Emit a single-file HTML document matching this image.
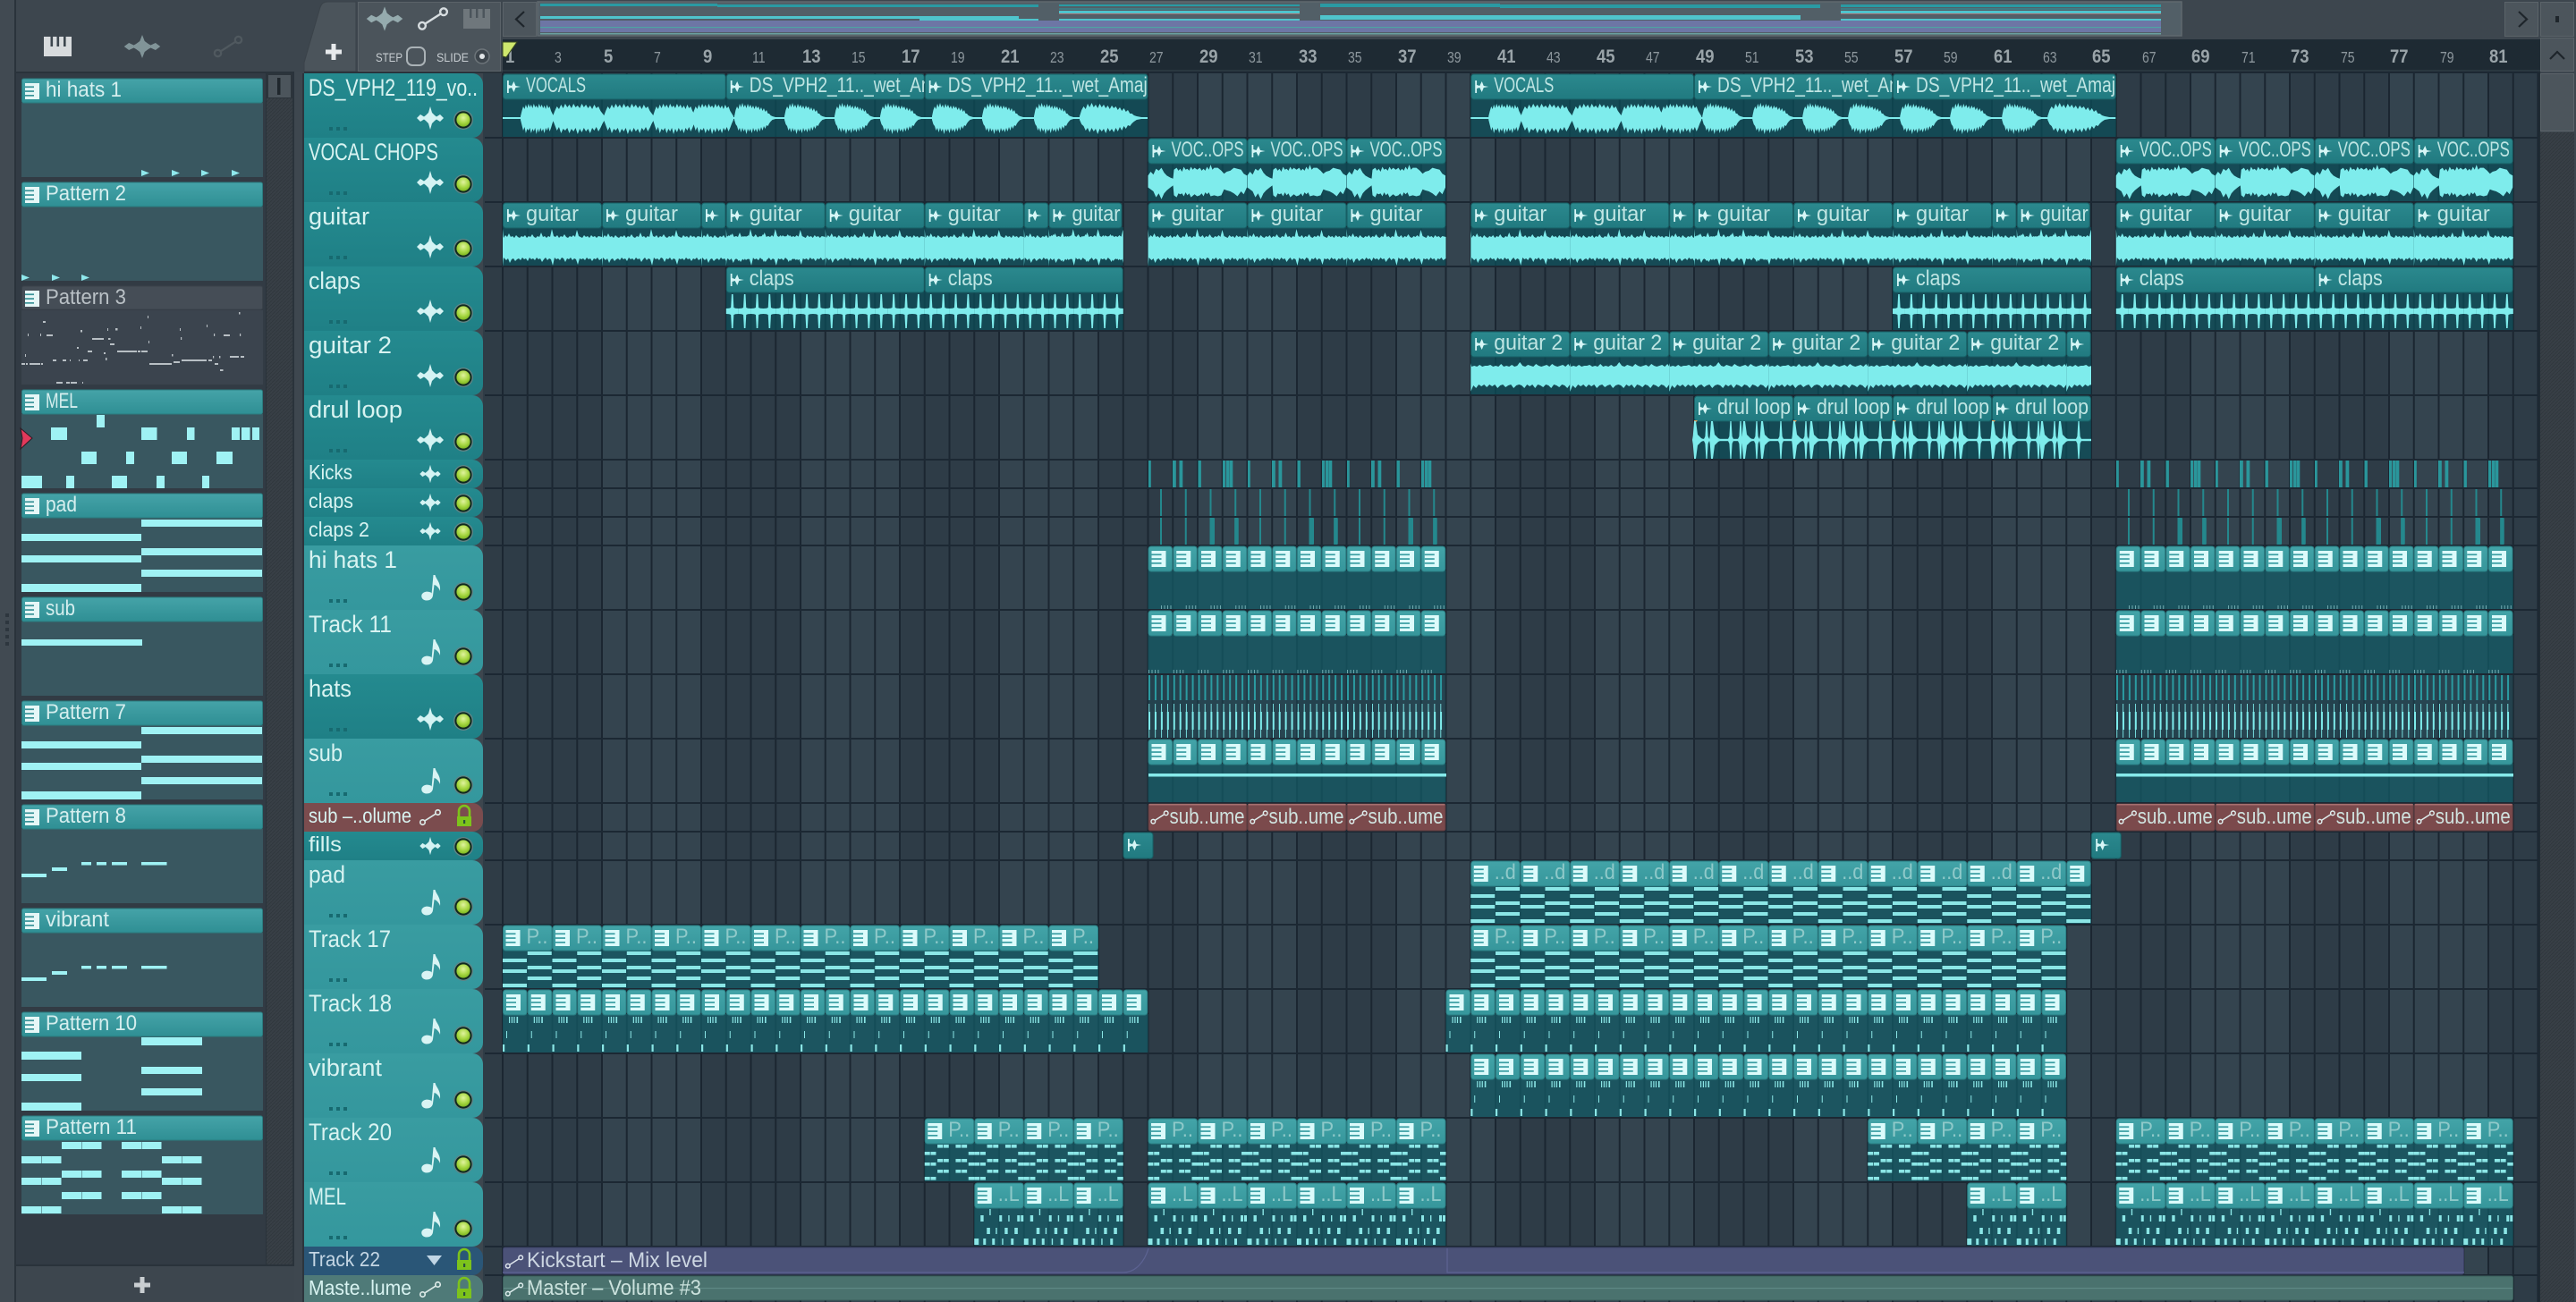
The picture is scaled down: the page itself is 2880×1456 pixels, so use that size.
<!DOCTYPE html>
<html><head><meta charset="utf-8"><title>Playlist</title>
<style>
html,body{margin:0;padding:0;background:#3b444c;overflow:hidden}
svg{display:block}
text{font-family:"Liberation Sans Narrow","Liberation Sans",sans-serif}
.ta{fill:url(#ga);stroke:#175f65;stroke-width:1}
.tp{fill:url(#gp);stroke:#2a7f84;stroke-width:1}
.c{font-size:24px;fill:#bfe5e3}
.d{font-size:24px;fill:#8fc9c9}
.h{font-size:27px;fill:#d8f3f1}
.s{font-size:23.5px;fill:#d8f3f1}
.l{font-size:24.5px;fill:#d5eeee}
.b{font-size:21px;font-weight:bold;fill:#9aa4a9;transform-box:fill-box;transform-origin:0 0;transform:scaleX(.88)}
.m{font-size:18px;fill:#8d979d;transform-box:fill-box;transform-origin:0 0;transform:scaleX(.78)}
</style></head><body>
<svg xmlns="http://www.w3.org/2000/svg" width="2880" height="1456" viewBox="0 0 2880 1456">
<defs>
<linearGradient id="ga" x1="0" y1="0" x2="0" y2="1"><stop offset="0" stop-color="#2b898e"/><stop offset="1" stop-color="#217a80"/></linearGradient>
<linearGradient id="gp" x1="0" y1="0" x2="0" y2="1"><stop offset="0" stop-color="#43a4a8"/><stop offset="1" stop-color="#36969b"/></linearGradient>
<linearGradient id="pk" x1="0" y1="0" x2="0" y2="1"><stop offset="0" stop-color="#45a3a8"/><stop offset="1" stop-color="#2f8f94"/></linearGradient>
<linearGradient id="ha" x1="0" y1="0" x2="0" y2="1"><stop offset="0" stop-color="#248a8f"/><stop offset="1" stop-color="#1f8086"/></linearGradient>
<linearGradient id="hp" x1="0" y1="0" x2="0" y2="1"><stop offset="0" stop-color="#399ca1"/><stop offset="1" stop-color="#34979d"/></linearGradient>
<radialGradient id="lg" cx=".5" cy=".35" r=".7"><stop offset="0" stop-color="#e0f39e"/><stop offset=".55" stop-color="#a8d844"/><stop offset="1" stop-color="#76b01a"/></radialGradient>
<pattern id="hatch" width="4" height="4" patternUnits="userSpaceOnUse"><rect width="4" height="4" fill="#383f46"/><path d="M0 4L4 0" stroke="#30373d" stroke-width="1"/></pattern>

<path id="wi" d="M-15 0L-11 -4L-7 -1.5L-5 -3L-2 -6L0 -13L2 -6L5 -3L7 -1.5L11 -4L15 0L11 4L7 1.5L5 3L2 6L0 13L-2 6L-5 3L-7 1.5L-11 4Z" fill="#d4f3f3"/>
<g id="led"><circle r="11" fill="#5f8486"/><circle r="9.6" fill="#10291f"/><circle r="7.6" fill="url(#lg)"/></g>
<g id="dots" fill="#176a70"><rect x="368" y="0" width="4" height="4"/><rect x="376" y="0" width="4" height="4"/><rect x="384" y="0" width="4" height="4"/></g>
<path id="hb" d="M340 0H528a12 12 0 0 1 12 12V60a12 12 0 0 1-12 12H340z"/>
<path id="hs" d="M340 0H528a12 12 0 0 1 12 12V20a12 12 0 0 1-12 12H340z"/>
<path id="note" fill="#d9f4f4" d="M482.5 55L484.5 33L486.5 33C487.5 38 493 41 492 51C490.5 46.5 487.5 44.5 485.5 44L484 56C483.5 60 480 61.5 477 61.5C472.5 61.5 470.5 58 471.5 55C473 51.5 478.5 50.5 482.5 53Z"/>
<g id="ha72"><use href="#hb" fill="url(#ha)"/><use href="#wi" x="481" y="50"/><use href="#led" x="518" y="52"/><use href="#dots" y="60"/></g>
<g id="hp72"><use href="#hb" fill="url(#hp)"/><use href="#note"/><use href="#led" x="518" y="52"/><use href="#dots" y="60"/></g>
<g id="ha32"><use href="#hs" fill="url(#ha)"/><use href="#wi" transform="translate(481 16) scale(.78)"/><use href="#led" x="518" y="17"/></g>
<g id="lock"><path d="M513 15V9a6 6 0 0 1 12 0V15" fill="none" stroke="#7dc31b" stroke-width="2.6"/><rect x="511" y="15" width="16" height="11" fill="#7dc31b"/><rect x="518" y="19" width="2.2" height="4" fill="#28503c"/></g>
<g id="au" fill="none" stroke-width="2"><path d="M-7 4.5L7 -4.5"/><circle cx="-10" cy="6.5" r="3.2"/><circle cx="10" cy="-6.5" r="3.2"/></g>

<path id="ai" fill="#d6f6f6" d="M0 -7L1.8 -7L1.8 -2L5 -1L7.5 -6L9.5 -1L15 0L9.5 1L7.5 6L5 1L1.8 2L1.8 7L0 7Z"/>
<g id="pi"><rect width="16" height="18" fill="#dcfbfb"/><rect y="3.4" width="11" height="1.7" fill="#3a9ea3"/><rect y="8.2" width="11" height="1.7" fill="#3a9ea3"/><rect y="13" width="11" height="1.7" fill="#3a9ea3"/></g>
<g id="pw"><rect width="16" height="18" fill="#e6f7f7"/><rect y="3.4" width="10" height="1.7" fill="#3a9398"/><rect y="8.2" width="10" height="1.7" fill="#3a9398"/><rect y="13" width="10" height="1.7" fill="#3a9398"/></g>

<g id="a1"><rect class="ta" x=".5" y="1" width="26.5" height="28" rx="3"/><use href="#ai" x="5" y="15"/></g>
<g id="a3"><rect class="ta" x=".5" y="1" width="81" height="28" rx="3"/><use href="#ai" x="5" y="15"/></g>
<g id="a4"><rect class="ta" x=".5" y="1" width="110" height="28" rx="3"/><use href="#ai" x="5" y="15"/></g>
<g id="a8"><rect class="ta" x=".5" y="1" width="221" height="28" rx="3"/><use href="#ai" x="5" y="15"/></g>
<g id="a9"><rect class="ta" x=".5" y="1" width="248.75" height="28" rx="3"/><use href="#ai" x="5" y="15"/></g>
<g id="tg"><use href="#a4"/><text class="c" x="26" y="21" textLength="59" lengthAdjust="spacingAndGlyphs">guitar</text></g>
<g id="tg3"><use href="#a3"/><text class="c" x="26" y="21" textLength="54" lengthAdjust="spacingAndGlyphs">guitar</text></g>
<g id="tc"><use href="#a8"/><text class="c" x="26" y="21" textLength="50" lengthAdjust="spacingAndGlyphs">claps</text></g>
<g id="tv"><use href="#a4"/><text class="c" x="26" y="21" textLength="81" lengthAdjust="spacingAndGlyphs">VOC..OPS</text></g>
<g id="t2"><use href="#a4"/><text class="c" x="26" y="21" textLength="77" lengthAdjust="spacingAndGlyphs">guitar 2</text></g>
<g id="td"><use href="#a4"/><text class="c" x="26" y="21" textLength="82" lengthAdjust="spacingAndGlyphs">drul loop</text></g>

<path id="vb" fill="#7eecec" d="M0 -2L3 -9L6 -13L9 -10L12 -16L15 -12L18 -17L21 -12L24 -15L27 -11L30 -16L33 -12L36 -15L39 -11L42 -14L45 -10L48 -14L51 -11L54 -13L57 -9L60 -12L63 -8L66 -11L69 -7L72 -9L75 -5L78 -5L81 -3L85 -2L92 -1L100 -1L100 1L92 1L85 2L81 4L78 6L75 9L72 8L69 12L66 9L63 14L60 10L57 15L54 11L51 16L48 12L45 15L42 11L39 17L36 12L33 15L30 12L27 18L24 12L21 15L18 11L15 16L12 11L9 14L6 9L3 7L0 2Z"/>
<path id="vd" fill="#7eecec" d="M0 -2L4 -8L8 -13L12 -10L16 -15L20 -11L24 -16L28 -12L32 -15L36 -11L40 -16L44 -12L48 -14L52 -11L56 -16L60 -12L64 -15L68 -11L72 -14L76 -10L80 -15L84 -11L88 -13L92 -8L96 -5L100 -2L100 2L96 6L92 11L88 15L84 10L80 14L76 11L72 17L68 12L64 15L60 11L56 16L52 12L48 18L44 11L40 15L36 12L32 17L28 11L24 14L20 12L16 17L12 10L8 14L4 8L0 2Z"/>
<g id="vw"><rect x="0" y="49" width="721" height="2"/><use href="#vd" transform="translate(20 50) scale(.37 1)"/><use href="#vd" transform="translate(56 50) scale(.58 1)"/><use href="#vd" transform="translate(113 50) scale(.56 1)"/><use href="#vd" transform="translate(168 50) scale(.48 1)"/><use href="#vd" transform="translate(212 50) scale(.46 1)"/><use href="#vb" transform="translate(259 50) scale(.5 1)"/><use href="#vb" transform="translate(315 50) scale(.5 1)"/><use href="#vb" transform="translate(371 50) scale(.48 1)"/><use href="#vb" transform="translate(422 50) scale(.5 1)"/><use href="#vb" transform="translate(480 50) scale(.5 1)"/><use href="#vb" transform="translate(536 50) scale(.5 1)"/><use href="#vb" transform="translate(594 50) scale(.48 1)"/><use href="#vb" transform="translate(645 50) scale(.75 1)"/></g>
<g id="r0"><use href="#a9"/><text class="c" x="26" y="21" textLength="67" lengthAdjust="spacingAndGlyphs">VOCALS</text><use href="#a8" x="249.75"/><text class="c" x="275.75" y="21" textLength="223" lengthAdjust="spacingAndGlyphs">DS_VPH2_11.._wet_Amaj</text><use href="#a9" x="471.75"/><text class="c" x="497.75" y="21" textLength="223" lengthAdjust="spacingAndGlyphs">DS_VPH2_11.._wet_Amaj</text><use href="#vw" fill="#7eecec"/></g>

<path id="cw" fill="#7eecec" transform="scale(1 1.1)" d="M0 -6L3 -10L6 -7L9 -13L12 -11L15 -14L18 -9L21 -6L25 -4L28 -3L29 -12L32 -14L34 -11L36 -13L38 -10L40 -15L42 -12L44 -13L46 -11L48 -15L50 -12L52 -14L55 -12L58 -14L60 -11L62 -13L64 -11L66 -15L68 -12L70 -17L72 -12L74 -14L78 -14L82 -11L85 -8L88 -10L92 -11L96 -14L100 -13L104 -12L107 -8L110.5 -6L110.5 6L107 13L104 10L100 15L96 12L92 10L88 9L85 8L82 14L78 15L74 14L70 15L68 11L66 13L64 11L62 15L60 12L58 14L55 15L52 13L48 16L46 12L44 14L42 11L40 15L38 12L36 13L34 12L32 16L29 14L28 4L25 6L21 9L18 12L15 18L12 12L9 16L6 10L3 8L0 6Z"/>
<g id="vc3"><use href="#tv"/><use href="#tv" x="111"/><use href="#tv" x="222"/><use href="#cw" x="0" y="49"/><use href="#cw" x="111" y="49"/><use href="#cw" x="222" y="49"/></g>

<path id="gw" fill="#7eecec" d="M0 -21L1 -11L3 -14L5 -12L7 -16L9 -12L11 -13L13 -11L15 -14L17 -12L19 -11L21 -13L23 -12L25 -14L27 -11L29 -13L31 -12L33 -15L35 -12L37 -11L39 -13L41 -12L43 -17L45 -12L47 -13L49 -11L51 -13L53 -12L55 -21L57 -13L59 -12L61 -14L63 -11L65 -13L67 -12L69 -15L71 -12L73 -11L75 -13L77 -12L79 -14L81 -12L83 -20L85 -13L87 -12L89 -11L91 -14L93 -12L95 -13L97 -11L99 -14L101 -12L103 -13L105 -11L107 -13L111 -12L111 12L108 14L106 11L104 13L102 12L100 15L98 12L96 13L94 11L92 14L90 12L88 13L86 12L84 19L82 13L80 12L78 14L76 11L74 13L72 12L70 16L68 12L66 11L64 14L62 12L60 13L58 11L56 20L54 13L52 12L50 14L48 11L46 13L44 16L42 12L40 13L38 11L36 14L34 12L32 13L30 11L28 15L26 12L24 13L22 11L20 14L18 12L16 13L14 15L12 12L10 13L8 17L6 12L4 14L2 12L1 11L0 21Z"/>
<clipPath id="c25"><rect x="0" y="0" width="693.75" height="72"/></clipPath>
<g id="g25"><use href="#tg"/><use href="#tg" x="111"/><use href="#a1" x="222"/><use href="#tg" x="249.75"/><use href="#tg" x="360.75"/><use href="#tg" x="471.75"/><use href="#a1" x="582.75"/><use href="#tg3" x="610.5"/><g clip-path="url(#c25)"><use href="#gw" x="0" y="51"/><use href="#gw" x="111" y="51"/><use href="#gw" x="222" y="51"/><use href="#gw" x="249.75" y="51"/><use href="#gw" x="360.75" y="51"/><use href="#gw" x="471.75" y="51"/><use href="#gw" x="582.75" y="51"/><use href="#gw" x="610.5" y="51"/></g></g>
<g id="g3"><use href="#tg"/><use href="#tg" x="111"/><use href="#tg" x="222"/><use href="#gw" y="51"/><use href="#gw" x="111" y="51"/><use href="#gw" x="222" y="51"/></g>

<path id="sp" fill="#7eecec" d="M-.8 -19L.8 -19L1.6 -4L3.5 -3.2L6.95 -3L6.95 3L3.5 3.2L1.6 4L.8 19L-.8 19L-1.6 4L-3.5 3.2L-6.95 3L-6.95 -3L-3.5 -3.2L-1.6 -4Z"/>
<g id="sp4"><use href="#sp" x="7"/><use href="#sp" x="20.9"/><use href="#sp" x="34.8"/><use href="#sp" x="48.6"/></g>
<g id="sp16"><use href="#sp4"/><use href="#sp4" x="55.5"/><use href="#sp4" x="111"/><use href="#sp4" x="166.5"/></g>
<g id="cl8"><use href="#tc"/><use href="#sp16" y="50"/></g>

<path id="g2w" fill="#7eecec" d="M0 -14L1 -10L4 -11L7 -10L10 -12L13 -10L16 -11L19 -11L22 -12L25 -10L28 -11L31 -10L34 -13L37 -10L40 -11L43 -10L46 -12L49 -10L52 -11L55 -15L58 -11L61 -10L64 -12L67 -11L70 -10L73 -13L76 -11L79 -10L82 -11L85 -12L88 -10L91 -13L94 -11L97 -10L100 -11L103 -12L106 -10L109 -13L111 -10L111 10L108 14L105 11L102 10L99 13L96 11L93 10L90 14L87 11L84 10L81 13L78 11L75 10L72 14L69 10L66 12L63 10L60 14L57 11L54 10L51 11L48 14L45 10L42 11L39 13L36 10L33 11L30 14L27 10L24 12L21 10L18 13L15 10L12 12L9 10L6 14L3 11L0 18Z"/>
<g id="g2r"><use href="#t2"/><use href="#t2" x="111"/><use href="#t2" x="222"/><use href="#t2" x="333"/><use href="#t2" x="444"/><use href="#t2" x="555"/><use href="#a1" x="666"/><g clip-path="url(#c25)"><use href="#g2w" y="50"/><use href="#g2w" x="111" y="50"/><use href="#g2w" x="222" y="50"/><use href="#g2w" x="333" y="50"/><use href="#g2w" x="444" y="50"/><use href="#g2w" x="555" y="50"/><use href="#g2w" x="666" y="50"/></g></g>

<path id="ds" fill="#7eecec" d="M-.6 -21L.6 -21L1.6 -4L3.5 0L1.6 4L.6 21L-.6 21L-1.6 4L-3.5 0L-1.6 -4Z"/>
<path id="dw" fill="#7eecec" d="M-1 -21L1 -21L3 -6L7 -2L11 0L7 2L3 6L1 21L-1 21L-2.2 5L-3 0L-2.2 -5Z"/>
<g id="dr"><use href="#td"/><path d="M0 28L4 28L0 33Z" fill="#d8a060"/><rect x="0" y="48.8" width="111" height="2.4" fill="#7eecec"/><use href="#dw" x="1" y="50"/><use href="#ds" x="14" y="50"/><use href="#dw" x="20" y="50"/><use href="#ds" x="41" y="50"/><use href="#ds" x="52" y="50"/><use href="#dw" x="56" y="50"/><use href="#ds" x="70" y="50"/><use href="#dw" x="76" y="50"/><use href="#ds" x="97" y="50"/></g>

<g id="k4" fill="#2a969b"><rect x="0" y="1" width="2.8" height="30"/><rect x="27" y="1" width="3.8" height="30"/><rect x="34.5" y="1" width="3.8" height="30"/><rect x="55.5" y="1" width="3.4" height="30"/><rect x="83" y="1" width="3.2" height="30"/><rect x="87" y="1" width="3.2" height="30"/><rect x="90.5" y="1" width="3.8" height="30"/></g>
<g id="cw4" fill="#24888d"><rect x="55.5" y="1" width="5.5" height="30" rx="1"/><rect x="83.25" y="1" width="4.5" height="30" rx="1"/></g>

<g id="p1"><rect class="tp" x=".5" y="1" width="26.5" height="28" rx="3"/><use href="#pi" x="4" y="6"/></g>
<g id="p4"><use href="#p1"/><use href="#p1" x="27.75"/><use href="#p1" x="55.5"/><use href="#p1" x="83.25"/></g>
<g id="p12"><use href="#p4"/><use href="#p4" x="111"/><use href="#p4" x="222"/></g>
<g id="p16"><use href="#p12"/><use href="#p4" x="333"/></g>

<g id="v1"><use href="#p1"/><g fill="#8be6e6"><rect x="7" y="31" width="1.2" height="7"/><rect x="9.8" y="31" width="1.2" height="7"/><rect x="12.4" y="31" width="1.2" height="7"/><rect x="15.5" y="31" width="1.6" height="7"/><rect x="4" y="47" width="1" height="8"/><rect x="0" y="62" width="2.2" height="8"/></g></g>
<g id="v4"><use href="#v1"/><use href="#v1" x="27.75"/><use href="#v1" x="55.5"/><use href="#v1" x="83.25"/></g>
<g id="v24"><use href="#v4"/><use href="#v4" x="111"/><use href="#v4" x="222"/><use href="#v4" x="333"/><use href="#v4" x="444"/><use href="#v4" x="555"/></g>

<g id="pt"><rect class="tp" x=".5" y="1" width="54.5" height="28" rx="3"/><use href="#pi" x="3.5" y="6"/></g>
<g id="np" fill="#8be6e6"><rect x="0" y="38" width="27" height="4"/><rect x="0" y="50" width="27" height="4"/><rect x="0" y="66" width="27" height="4"/><rect x="27.75" y="30" width="27" height="4"/><rect x="27.75" y="46" width="27" height="4"/><rect x="27.75" y="58" width="27" height="4"/></g>
<g id="pd"><use href="#pt"/><text class="d" x="26.5" y="21" textLength="24" lengthAdjust="spacingAndGlyphs">..d</text><use href="#np"/></g>
<g id="pp"><use href="#pt"/><text class="d" x="26.5" y="21" textLength="24" lengthAdjust="spacingAndGlyphs">P..</text><use href="#np"/></g>
<g id="pd4"><use href="#pd"/><use href="#pd" x="55.5"/><use href="#pd" x="111"/><use href="#pd" x="166.5"/></g>
<g id="pp4"><use href="#pp"/><use href="#pp" x="55.5"/><use href="#pp" x="111"/><use href="#pp" x="166.5"/></g>
<g id="pp12"><use href="#pp4"/><use href="#pp4" x="222"/><use href="#pp4" x="444"/></g>

<g id="n20" fill="#8be6e6"><rect x="14.3" y="30" width="6" height="3.6"/><rect x="21" y="30" width="6" height="3.6"/><rect x="34.7" y="30" width="6" height="3.6"/><rect x="41.4" y="30" width="6" height="3.6"/><rect x="0" y="38" width="6" height="3.6"/><rect x="6.7" y="38" width="6" height="3.6"/><rect x="49" y="38" width="6.5" height="3.6"/><rect x="14.3" y="46" width="6" height="3.6"/><rect x="21" y="46" width="6" height="3.6"/><rect x="34.7" y="46" width="6" height="3.6"/><rect x="41.4" y="46" width="6" height="3.6"/><rect x="0" y="50" width="6" height="3.6"/><rect x="6.7" y="50" width="6" height="3.6"/><rect x="49" y="50" width="6.5" height="3.6"/><rect x="14.3" y="58" width="6" height="3.6"/><rect x="21" y="58" width="6" height="3.6"/><rect x="34.7" y="58" width="6" height="3.6"/><rect x="41.4" y="58" width="6" height="3.6"/><rect x="0" y="66" width="6" height="3.6"/><rect x="6.7" y="66" width="6" height="3.6"/><rect x="49" y="66" width="6.5" height="3.6"/></g>
<g id="t20"><use href="#pt"/><text class="d" x="26.5" y="21" textLength="24" lengthAdjust="spacingAndGlyphs">P..</text><use href="#n20"/></g>
<g id="t20x2"><use href="#t20"/><use href="#t20" x="55.5"/></g>
<g id="t20x4"><use href="#t20x2"/><use href="#t20x2" x="111"/></g>

<g id="nm" fill="#8be6e6"><rect x="17" y="30" width="1.4" height="7"/><rect x="7" y="37" width="3.4" height="7"/><rect x="28" y="37" width="3" height="7"/><rect x="38" y="37" width="1.4" height="7"/><rect x="48" y="37" width="3" height="7"/><rect x="52" y="37" width="3" height="7"/><rect x="14" y="51" width="3.6" height="7"/><rect x="24" y="51" width="1.4" height="7"/><rect x="34" y="51" width="3.4" height="7"/><rect x="45" y="51" width="3.6" height="7"/><rect x="0" y="63" width="5" height="7"/><rect x="10" y="63" width="3" height="7"/><rect x="20" y="63" width="3" height="7"/><rect x="31" y="63" width="1.4" height="7"/><rect x="41" y="63" width="3" height="7"/></g>
<g id="tm"><use href="#pt"/><text class="d" x="26.5" y="21" textLength="24" lengthAdjust="spacingAndGlyphs">..L</text><use href="#nm"/></g>
<g id="tmx2"><use href="#tm"/><use href="#tm" x="55.5"/></g>
<g id="tmx4"><use href="#tmx2"/><use href="#tmx2" x="111"/></g>

<g id="rc"><rect x=".5" y="1" width="110" height="30" rx="2" fill="#7b4a4c" stroke="#5a3a3e"/><rect x="1" y="1" width="109" height="1.5" fill="#a56f6f"/><use href="#au" transform="translate(13 16) scale(.72)" stroke="#dfeeee"/><text x="24" y="23" font-size="24" fill="#cfe2de" textLength="84" lengthAdjust="spacingAndGlyphs">sub..ume</text></g>

<g id="phd"><rect x="24.5" y="0" width="269" height="27" rx="2" fill="url(#pk)" stroke="#2b7d80"/><use href="#pw" x="28" y="5"/></g>
<rect id="pbody" x="24" y="27" width="270" height="83" fill="#395760"/>
<g id="npad" fill="#9ff2f4"><rect x="158" y="29" width="135" height="8"/><rect x="24" y="45" width="134" height="8"/><rect x="158" y="61" width="135" height="8"/><rect x="24" y="69" width="134" height="8"/><rect x="158" y="85" width="135" height="8"/><rect x="24" y="101" width="134" height="9"/></g>
<g id="n8" fill="#9ff2f4"><rect x="24" y="77" width="28" height="4"/><rect x="58" y="70" width="17" height="4"/><rect x="91" y="64" width="11" height="3.5"/><rect x="108" y="64" width="11" height="3.5"/><rect x="125" y="64" width="17" height="3.5"/><rect x="158" y="64" width="28.5" height="3.5"/></g>
<g id="tri" fill="#8fe8ec"><path d="M0 0L9 3.5L0 7Z"/></g>
</defs>

<!-- base -->
<rect width="2880" height="1456" fill="#3d464e"/>
<rect x="0" y="0" width="16" height="1456" fill="#414a52"/>
<rect x="16" y="0" width="2" height="1456" fill="#2a333b"/>
<g fill="#2d363e"><rect x="6" y="686" width="4" height="4"/><rect x="6" y="694" width="4" height="4"/><rect x="6" y="702" width="4" height="4"/><rect x="6" y="710" width="4" height="4"/><rect x="6" y="718" width="4" height="4"/></g>

<!-- top-left icons -->
<g><rect x="49" y="41" width="31" height="22" fill="#d8dbdd"/><g fill="#3d464e"><rect x="56.5" y="41" width="2.6" height="11"/><rect x="63.5" y="41" width="2.6" height="11"/><rect x="71" y="41" width="2.6" height="11"/></g></g>
<use href="#wi" transform="translate(159 52) scale(1.35 1)" style="fill:#4f585f" opacity=".45"/>
<use href="#au" transform="translate(255 52) scale(1.15)" stroke="#50595f"/>

<!-- picker -->
<rect x="16" y="80" width="313" height="1336" fill="#2a333b"/>
<rect x="18" y="82" width="279" height="1332" fill="#323b44"/>
<rect x="298" y="82" width="29" height="1332" fill="url(#hatch)"/>
<rect x="298" y="82" width="29" height="28" fill="#2c343b"/><rect x="300" y="84" width="25" height="25" fill="#4c555c"/><rect x="310" y="87" width="3.5" height="19" fill="#1f262c"/>
<path d="M159 1428v18M150 1437h18" stroke="#c9ced1" stroke-width="5"/>

<!-- items -->
<g transform="translate(0 88)"><use href="#pbody"/><use href="#phd"/><text class="l" x="51" y="20" textLength="85" lengthAdjust="spacingAndGlyphs">hi hats 1</text><use href="#tri" x="158" y="102"/><use href="#tri" x="192" y="102"/><use href="#tri" x="225" y="102"/><use href="#tri" x="259" y="102"/></g>
<g transform="translate(0 204)"><use href="#pbody"/><use href="#phd"/><text class="l" x="51" y="20" textLength="90" lengthAdjust="spacingAndGlyphs">Pattern 2</text><use href="#tri" x="24" y="103"/><use href="#tri" x="58" y="103"/><use href="#tri" x="91" y="103"/></g>
<g transform="translate(0 320)"><rect x="24" y="27" width="270" height="83" fill="#3b444e"/><rect x="24.5" y="0" width="269" height="26" rx="2" fill="#454d56" stroke="#3a424a"/><use href="#pw" x="28" y="5"/><text class="l" x="51" y="20" textLength="90" lengthAdjust="spacingAndGlyphs" style="fill:#b9c0c5">Pattern 3</text></g>
<g fill="#b8bfc4"><rect x="48" y="359" width="3" height="2"/><rect x="165" y="353" width="1" height="3"/><rect x="267" y="349" width="1.5" height="2.5"/><rect x="90" y="369" width="2" height="2.5"/><rect x="52" y="374" width="7" height="2"/><rect x="31" y="373" width="1" height="3"/><rect x="45" y="373" width="1" height="3"/><rect x="120" y="367" width="1" height="3"/><rect x="129" y="367" width="2.5" height="2.5"/><rect x="157" y="365" width="1" height="3"/><rect x="201" y="367" width="1" height="3"/><rect x="231" y="363" width="1" height="3"/><rect x="239" y="373" width="1.2" height="3"/><rect x="250" y="374" width="7" height="2"/><rect x="268" y="373" width="1.2" height="3"/><rect x="103" y="378" width="13" height="2"/><rect x="121" y="378" width="2.5" height="2"/><rect x="202" y="377" width="1.2" height="3"/><rect x="166" y="381" width="1" height="3"/><rect x="123" y="384" width="5" height="2"/><rect x="86" y="388" width="2" height="2"/><rect x="98" y="392" width="5" height="2"/><rect x="131" y="392" width="22" height="2"/><rect x="154" y="392" width="3" height="2"/><rect x="158" y="392" width="7" height="2"/><rect x="116" y="394" width="2" height="2"/><rect x="28" y="396" width="1" height="3"/><rect x="192" y="396" width="1.5" height="2.5"/><rect x="238" y="398" width="1.2" height="2.5"/><rect x="245" y="398" width="1.4" height="2.5"/><rect x="257" y="398" width="10" height="2"/><rect x="269" y="398" width="4" height="2"/><rect x="118" y="400" width="1.5" height="3"/><rect x="59" y="402" width="4" height="2"/><rect x="70" y="402" width="4" height="2"/><rect x="78" y="402" width="1" height="2"/><rect x="88" y="402" width="1" height="2"/><rect x="93" y="402" width="5" height="2"/><rect x="24" y="406" width="4" height="2"/><rect x="29" y="406" width="2" height="2"/><rect x="33" y="406" width="12" height="2"/><rect x="46" y="406" width="2" height="2"/><rect x="167" y="406" width="25" height="2"/><rect x="194" y="404" width="7" height="2"/><rect x="203" y="402" width="28" height="2"/><rect x="233" y="402" width="4" height="2"/><rect x="240" y="406" width="4" height="2"/><rect x="246" y="413" width="3.5" height="2"/><rect x="63" y="427" width="7" height="2"/><rect x="74" y="427" width="4" height="2"/><rect x="79" y="427" width="7" height="2"/><rect x="92" y="427" width="1" height="2"/></g>

<g transform="translate(0 436)"><use href="#pbody"/><use href="#phd"/><text class="l" x="51" y="20" textLength="36" lengthAdjust="spacingAndGlyphs">MEL</text></g>
<g fill="#9ff2f4"><rect x="108" y="464" width="9" height="14"/><rect x="57" y="478" width="18" height="14"/><rect x="158" y="478" width="17.5" height="14"/><rect x="209" y="478" width="8.5" height="14"/><rect x="259" y="478" width="9" height="14"/><rect x="270" y="478" width="9.5" height="14"/><rect x="282" y="478" width="8" height="14"/><rect x="91" y="505" width="17" height="14"/><rect x="141" y="505" width="9" height="14"/><rect x="192" y="505" width="17" height="14"/><rect x="242" y="505" width="18" height="14"/><rect x="24" y="532" width="23" height="14"/><rect x="74" y="532" width="9" height="14"/><rect x="125" y="532" width="17" height="14"/><rect x="175" y="532" width="9" height="14"/><rect x="226" y="532" width="8" height="14"/></g>
<path d="M23 479L36 490L23 502L25 490Z" fill="#e2395b" stroke="#2a1c24" stroke-width="1"/>

<g transform="translate(0 552)"><use href="#pbody"/><use href="#phd"/><text class="l" x="51" y="20" textLength="35" lengthAdjust="spacingAndGlyphs">pad</text><use href="#npad"/></g>
<g transform="translate(0 668)"><use href="#pbody"/><use href="#phd"/><text class="l" x="51" y="20" textLength="33" lengthAdjust="spacingAndGlyphs">sub</text><rect x="24" y="47" width="135" height="7" fill="#9ff2f4"/></g>
<g transform="translate(0 784)"><use href="#pbody"/><use href="#phd"/><text class="l" x="51" y="20" textLength="90" lengthAdjust="spacingAndGlyphs">Pattern 7</text><use href="#npad"/></g>
<g transform="translate(0 900)"><use href="#pbody"/><use href="#phd"/><text class="l" x="51" y="20" textLength="90" lengthAdjust="spacingAndGlyphs">Pattern 8</text><use href="#n8"/></g>
<g transform="translate(0 1016)"><use href="#pbody"/><use href="#phd"/><text class="l" x="51" y="20" textLength="71" lengthAdjust="spacingAndGlyphs">vibrant</text><use href="#n8"/></g>
<g transform="translate(0 1132)"><use href="#pbody"/><use href="#phd"/><text class="l" x="51" y="20" textLength="102" lengthAdjust="spacingAndGlyphs">Pattern 10</text><g fill="#9ff2f4"><rect x="158" y="28" width="68" height="9"/><rect x="24" y="44" width="67" height="9"/><rect x="158" y="61" width="68" height="8"/><rect x="24" y="69" width="67" height="8"/><rect x="158" y="85" width="68" height="8"/><rect x="24" y="101" width="67" height="9"/></g></g>
<g transform="translate(0 1248)"><use href="#pbody"/><use href="#phd"/><text class="l" x="51" y="20" textLength="102" lengthAdjust="spacingAndGlyphs">Pattern 11</text>
<g fill="#9ff2f4"><g id="p11a"><rect x="69" y="29" width="22" height="8"/><rect x="91.5" y="29" width="22" height="8"/><rect x="136" y="29" width="22" height="8"/><rect x="158.5" y="29" width="22" height="8"/></g><g id="p11b"><rect x="24" y="45" width="22" height="8"/><rect x="46.5" y="45" width="22" height="8"/><rect x="181" y="45" width="22" height="8"/><rect x="203.5" y="45" width="22" height="8"/></g><use href="#p11a" y="32"/><use href="#p11b" y="24"/><use href="#p11a" y="56"/><use href="#p11b" y="56"/></g></g>

<!-- top tab + panel -->
<path d="M340 80V70L358 8Q360 2 366 2H398V80Z" fill="#4b545b" stroke="#3a4249" stroke-width="1"/>
<path d="M373 49v18M364 58h18" stroke="#e7eaec" stroke-width="5"/>
<rect x="400.5" y="2.5" width="159" height="77" fill="#4b545b" stroke="#5b6369"/>
<use href="#wi" transform="translate(430 21) scale(1.35 1.05)" style="fill:#6b7378" opacity=".55"/>
<use href="#au" transform="translate(484 21) scale(1.2)" stroke="#d7dde0"/>
<g><rect x="518" y="10" width="30" height="22" fill="#6f777c"/><g fill="#4b545b"><rect x="525" y="10" width="2.4" height="10"/><rect x="532" y="10" width="2.4" height="10"/><rect x="539.5" y="10" width="2.4" height="10"/></g></g>
<text x="420" y="69" font-size="14" fill="#c6ccd0" textLength="30" lengthAdjust="spacingAndGlyphs">STEP</text>
<rect x="455" y="53" width="20" height="20" rx="6" fill="none" stroke="#aab2b6" stroke-width="2"/>
<text x="488" y="69" font-size="14" fill="#c6ccd0" textLength="36" lengthAdjust="spacingAndGlyphs">SLIDE</text>
<circle cx="539" cy="63" r="8" fill="#3d454c" stroke="#6d757a" stroke-width="1.5"/><circle cx="539" cy="63" r="3" fill="#e2e6e8"/>

<!-- nav -->
<rect x="562.5" y="2.5" width="37" height="38" fill="#4c555c" stroke="#5b6369"/>
<path d="M586 13L577 21.5L586 30" fill="none" stroke="#1e252b" stroke-width="2.2"/>
<rect x="2800.5" y="2.5" width="37" height="38" fill="#4c555c" stroke="#5b6369"/>
<path d="M2816 13L2825 21.5L2816 30" fill="none" stroke="#1e252b" stroke-width="2.2"/>
<rect x="2840.5" y="2.5" width="37" height="38" fill="#4c555c" stroke="#5b6369"/><rect x="2857" y="18" width="4" height="7" fill="#1f262c"/>
<rect x="2840.5" y="42.5" width="37" height="37" fill="#4c555c" stroke="#5b6369"/><path d="M2851 66L2859 58L2867 66" fill="none" stroke="#1e252b" stroke-width="2.2"/>
<rect x="2840.5" y="82.5" width="37" height="64" fill="#4c555c" stroke="#5b6369"/>
<rect x="2840" y="148" width="38" height="1308" fill="url(#hatch)"/>

<!-- overview -->
<rect x="601" y="2" width="1838" height="38" fill="#525f67" stroke="#60696f" stroke-width="1.5"/>
<rect x="604" y="23" width="1812" height="13" fill="#6d76a5"/>
<g fill="#2a9aa3"><rect x="604" y="4" width="198" height="3"/><rect x="802" y="5" width="359" height="3"/><rect x="1184" y="5" width="269" height="2"/><rect x="1476" y="4" width="201" height="4"/><rect x="1677" y="5" width="358" height="4"/><rect x="2058" y="5" width="358" height="3"/><rect x="1184" y="9" width="269" height="2" opacity=".5"/><rect x="2058" y="9" width="358" height="2" opacity=".5"/></g>
<g fill="#4fc4cc"><rect x="604" y="18" width="535" height="3"/><rect x="1184" y="12" width="269" height="4"/><rect x="1476" y="17" width="537" height="5"/><rect x="2058" y="12" width="358" height="4"/><rect x="1184" y="21" width="269" height="2"/><rect x="2058" y="21" width="358" height="2"/><rect x="1028" y="21" width="133" height="2"/></g>
<rect x="1184" y="15" width="269" height="1" fill="#a56f6f"/><rect x="2058" y="15" width="358" height="1" fill="#a56f6f"/>
<rect x="604" y="30" width="1812" height="1.2" fill="#4fa3a3"/>
<rect x="604" y="37" width="1812" height="1.5" fill="#6aa09f"/>

<!-- ruler -->
<rect x="562" y="44" width="2278" height="36" fill="#1e2a33"/>
<rect x="562" y="78" width="2278" height="2" fill="#2a3740"/>
<text class="b" x="565" y="70">1</text><text class="m" x="620" y="70">3</text><text class="b" x="675" y="70">5</text><text class="m" x="731" y="70">7</text><text class="b" x="786" y="70">9</text><text class="m" x="841" y="70">11</text><text class="b" x="897" y="70">13</text><text class="m" x="952" y="70">15</text><text class="b" x="1008" y="70">17</text><text class="m" x="1063" y="70">19</text><text class="b" x="1119" y="70">21</text><text class="m" x="1174" y="70">23</text><text class="b" x="1230" y="70">25</text><text class="m" x="1285" y="70">27</text><text class="b" x="1341" y="70">29</text><text class="m" x="1396" y="70">31</text><text class="b" x="1452" y="70">33</text><text class="m" x="1507" y="70">35</text><text class="b" x="1563" y="70">37</text><text class="m" x="1618" y="70">39</text><text class="b" x="1674" y="70">41</text><text class="m" x="1729" y="70">43</text><text class="b" x="1785" y="70">45</text><text class="m" x="1840" y="70">47</text><text class="b" x="1896" y="70">49</text><text class="m" x="1951" y="70">51</text><text class="b" x="2007" y="70">53</text><text class="m" x="2062" y="70">55</text><text class="b" x="2118" y="70">57</text><text class="m" x="2173" y="70">59</text><text class="b" x="2229" y="70">61</text><text class="m" x="2284" y="70">63</text><text class="b" x="2339" y="70">65</text><text class="m" x="2395" y="70">67</text><text class="b" x="2450" y="70">69</text><text class="m" x="2506" y="70">71</text><text class="b" x="2561" y="70">73</text><text class="m" x="2617" y="70">75</text><text class="b" x="2672" y="70">77</text><text class="m" x="2728" y="70">79</text><text class="b" x="2783" y="70">81</text>
<path d="M562 47H578L566 64L562 63Z" fill="#cfe86e" stroke="#3a4a20" stroke-width="1"/>

<!-- grid -->
<rect x="540" y="80" width="22" height="1376" fill="#2f3c46"/>
<rect x="562" y="80" width="2276" height="1376" fill="#2e3c47"/>
<line x1="673" y1="768" x2="2838" y2="768" stroke="#34444f" stroke-width="1376" stroke-dasharray="111 111"/>
<line x1="561" y1="768" x2="2838" y2="768" stroke="#1b2631" stroke-width="1376" stroke-dasharray="2 25.75"/>
<path d="M542 81H2838M542 154H2838M542 226H2838M542 298H2838M542 370H2838M542 442H2838M542 514H2838M542 546H2838M542 578H2838M542 610H2838M542 682H2838M542 754H2838M542 826H2838M542 898H2838M542 930H2838M542 962H2838M542 1034H2838M542 1106H2838M542 1178H2838M542 1250H2838M542 1322H2838M542 1394H2838M542 1426H2838" stroke="#1c2833" stroke-width="2"/>
<rect x="2838" y="80" width="2" height="1376" fill="#1f2a33"/>

<!-- clip bodies -->
<path fill="rgb(12,77,88)" fill-opacity=".75" d="M562 110h721.5v43h-721.5zM1644.25 110h721.5v43h-721.5zM1283.5 182h333v43h-333zM2365.75 182h444v43h-444zM562 254h693.75v43h-693.75zM1283.5 254h333v43h-333zM1644.25 254h693.75v43h-693.75zM2365.75 254h444v43h-444zM811.75 326h444v43h-444zM2116 326h222v43h-222zM2365.75 326h444v43h-444zM1644.25 398h693.75v43h-693.75zM1894 470h444v43h-444z"/>
<path fill="rgb(20,91,102)" fill-opacity=".75" d="M1283.5 638h333v43h-333zM2365.75 638h444v43h-444zM1283.5 710h333v43h-333zM2365.75 710h444v43h-444zM1283.5 854h333v43h-333zM2365.75 854h444v43h-444zM1644.25 990h693.75v43h-693.75zM562 1062h666v43h-666zM1644.25 1062h666v43h-666zM562 1134h721.5v43h-721.5zM1616.5 1134h693.75v43h-693.75zM1644.25 1206h666v43h-666zM1033.75 1278h222v43h-222zM1283.5 1278h333v43h-333zM2088.25 1278h222v43h-222zM2365.75 1278h444v43h-444zM1089.25 1350h166.5v43h-166.5zM1283.5 1350h333v43h-333zM2199.25 1350h111v43h-111zM2365.75 1350h444v43h-444z"/>

<!-- R0 -->
<use href="#r0" x="562" y="82"/><use href="#r0" x="1644.25" y="82"/>
<!-- R1 -->
<use href="#vc3" x="1283.5" y="154"/><use href="#vc3" x="2365.75" y="154"/><use href="#tv" x="2698.75" y="154"/><use href="#cw" x="2698.75" y="203"/>
<!-- R2 -->
<use href="#g25" x="562" y="226"/><use href="#g25" x="1644.25" y="226"/>
<use href="#g3" x="1283.5" y="226"/><use href="#g3" x="2365.75" y="226"/><use href="#tg" x="2698.75" y="226"/><use href="#gw" x="2698.75" y="277"/>
<!-- R3 -->
<use href="#cl8" x="811.75" y="298"/><use href="#cl8" x="1033.75" y="298"/><use href="#cl8" x="2116" y="298"/><use href="#cl8" x="2365.75" y="298"/><use href="#cl8" x="2587.75" y="298"/>
<!-- R4 -->
<use href="#g2r" x="1644.25" y="370"/>
<!-- R5 -->
<use href="#dr" x="1894" y="442"/><use href="#dr" x="2005" y="442"/><use href="#dr" x="2116" y="442"/><use href="#dr" x="2227" y="442"/>
<!-- R6 kicks -->
<use href="#k4" x="1284" y="514"/><use href="#k4" x="1395" y="514"/><use href="#k4" x="1506" y="514"/>
<use href="#k4" x="2366" y="514"/><use href="#k4" x="2477" y="514"/><use href="#k4" x="2588" y="514"/><use href="#k4" x="2699" y="514"/>
<!-- R7/R8 claps -->
<g stroke="#24888d" stroke-dasharray="2 25.75" stroke-width="30"><line x1="1297" y1="562" x2="1617" y2="562"/><line x1="2379" y1="562" x2="2810" y2="562"/><line x1="1297" y1="594" x2="1617" y2="594"/><line x1="2379" y1="594" x2="2810" y2="594"/></g>
<use href="#cw4" x="1297" y="578"/><use href="#cw4" x="1408" y="578"/><use href="#cw4" x="1519" y="578"/>
<use href="#cw4" x="2379" y="578"/><use href="#cw4" x="2490" y="578"/><use href="#cw4" x="2601" y="578"/><use href="#cw4" x="2712" y="578"/>
<!-- R9/R10/R12 -->
<use href="#p12" x="1283.5" y="610"/><use href="#p16" x="2365.75" y="610"/>
<use href="#p12" x="1283.5" y="682"/><use href="#p16" x="2365.75" y="682"/>
<g stroke="#6fa8ad" stroke-width="4" stroke-dasharray="1 2.5 1 2.5 1 2.5 1 16.25"><line x1="1298" y1="679" x2="1615" y2="679"/><line x1="2380" y1="679" x2="2808" y2="679"/><line x1="1284" y1="751" x2="1605" y2="751"/><line x1="2366" y1="751" x2="2800" y2="751"/></g>
<!-- R11 hats -->
<rect x="1283.5" y="755" width="333" height="70" fill="#1d4753" opacity=".55"/><rect x="2365.75" y="755" width="444" height="70" fill="#1d4753" opacity=".55"/>
<g stroke="#2b9ba1" stroke-width="28" stroke-dasharray="2 4.9375"><line x1="1284" y1="769" x2="1616" y2="769"/><line x1="2366" y1="769" x2="2810" y2="769"/></g>
<g stroke="#7eecec" stroke-width="38" stroke-dasharray=".9 6.0375"><line x1="1284.3" y1="806" x2="1616" y2="806"/><line x1="2366.3" y1="806" x2="2810" y2="806"/></g>
<g stroke="#7eecec" stroke-width="20" stroke-dasharray="2 4.9375"><line x1="1284" y1="806" x2="1616" y2="806"/><line x1="2366" y1="806" x2="2810" y2="806"/></g>
<!-- R12 -->
<use href="#p12" x="1283.5" y="826"/><use href="#p16" x="2365.75" y="826"/>
<rect x="1284" y="865" width="333" height="3.5" fill="#86eaea"/><rect x="2366" y="865" width="444" height="3.5" fill="#86eaea"/>
<!-- R13 -->
<use href="#rc" x="1283.5" y="898"/><use href="#rc" x="1394.5" y="898"/><use href="#rc" x="1505.5" y="898"/>
<use href="#rc" x="2365.75" y="898"/><use href="#rc" x="2476.75" y="898"/><use href="#rc" x="2587.75" y="898"/><use href="#rc" x="2698.75" y="898"/>
<!-- R14 fills -->
<g id="fi"><rect class="ta" x="1256" y="931" width="33" height="29" rx="3"/><use href="#ai" x="1261" y="945"/></g>
<use href="#fi" x="1082.25"/>
<!-- R15 -->
<use href="#pd4" x="1644.25" y="962"/><use href="#pd4" x="1866.25" y="962"/><use href="#pd4" x="2088.25" y="962"/><use href="#p1" x="2310.25" y="962"/>
<g fill="#8be6e6"><rect x="2310.25" y="1000" width="27" height="4"/><rect x="2310.25" y="1012" width="27" height="4"/><rect x="2310.25" y="1028" width="27" height="4"/></g>
<!-- R16 -->
<use href="#pp12" x="562" y="1034"/><use href="#pp12" x="1644.25" y="1034"/>
<!-- R17 -->
<use href="#v24" x="562" y="1106"/><use href="#v1" x="1228" y="1106"/><use href="#v1" x="1255.75" y="1106"/>
<use href="#v1" x="1616.5" y="1106"/><use href="#v24" x="1644.25" y="1106"/>
<!-- R18 -->
<use href="#v24" x="1644.25" y="1178"/>
<!-- R19 -->
<use href="#t20x4" x="1033.75" y="1250"/><use href="#t20x4" x="1283.5" y="1250"/><use href="#t20x2" x="1505.5" y="1250"/>
<use href="#t20x4" x="2088.25" y="1250"/><use href="#t20x4" x="2365.75" y="1250"/><use href="#t20x4" x="2587.75" y="1250"/>
<!-- R20 -->
<use href="#tmx2" x="1089.25" y="1322"/><use href="#tm" x="1200.25" y="1322"/>
<use href="#tmx4" x="1283.5" y="1322"/><use href="#tmx2" x="1505.5" y="1322"/>
<use href="#tmx2" x="2199.25" y="1322"/>
<use href="#tmx4" x="2365.75" y="1322"/><use href="#tmx4" x="2587.75" y="1322"/>
<!-- R21 -->
<rect x="562.5" y="1395" width="2192" height="30" rx="2" fill="#4b5278" stroke="#3a4063"/>
<path d="M562 1423H1256C1270 1423 1280 1410 1284 1396M1618 1396V1423H2755" fill="none" stroke="#5d6393" stroke-width="1.2"/>
<use href="#au" transform="translate(575 1411) scale(.72)" stroke="#dfe6ee"/>
<text x="589" y="1417" font-size="24" fill="#ccd6e2" textLength="202" lengthAdjust="spacingAndGlyphs">Kickstart – Mix level</text>
<!-- R22 -->
<rect x="562.5" y="1427" width="2247" height="27" rx="2" fill="#4a726e" stroke="#3a5e5b"/>
<rect x="563" y="1440" width="2246" height="1.2" fill="#5f8a85"/>
<use href="#au" transform="translate(575 1442) scale(.72)" stroke="#dfeeee"/>
<text x="589" y="1448" font-size="24" fill="#cbe2dd" textLength="195" lengthAdjust="spacingAndGlyphs">Master – Volume #3</text>

<!-- track headers -->
<rect x="329" y="80" width="11" height="1376" fill="#3e474f"/>
<rect x="327" y="80" width="2" height="1336" fill="#2a333b"/><rect x="338" y="82" width="2" height="1374" fill="#2c353d"/>
<rect x="340" y="80" width="222" height="2" fill="#2a333b"/>
<use href="#ha72" y="82"/><text class="h" x="345" y="107" textLength="189" lengthAdjust="spacingAndGlyphs">DS_VPH2_119_vo..</text>
<use href="#ha72" y="154"/><text class="h" x="345" y="179" textLength="145" lengthAdjust="spacingAndGlyphs">VOCAL CHOPS</text>
<use href="#ha72" y="226"/><text class="h" x="345" y="251" textLength="68" lengthAdjust="spacingAndGlyphs">guitar</text>
<use href="#ha72" y="298"/><text class="h" x="345" y="323" textLength="58" lengthAdjust="spacingAndGlyphs">claps</text>
<use href="#ha72" y="370"/><text class="h" x="345" y="395" textLength="93" lengthAdjust="spacingAndGlyphs">guitar 2</text>
<use href="#ha72" y="442"/><text class="h" x="345" y="467" textLength="105" lengthAdjust="spacingAndGlyphs">drul loop</text>
<use href="#ha32" y="514"/><text class="s" x="345" y="536" textLength="49" lengthAdjust="spacingAndGlyphs">Kicks</text>
<use href="#ha32" y="546"/><text class="s" x="345" y="568" textLength="50" lengthAdjust="spacingAndGlyphs">claps</text>
<use href="#ha32" y="578"/><text class="s" x="345" y="600" textLength="68" lengthAdjust="spacingAndGlyphs">claps 2</text>
<use href="#hp72" y="610"/><text class="h" x="345" y="635" textLength="99" lengthAdjust="spacingAndGlyphs">hi hats 1</text>
<use href="#hp72" y="682"/><text class="h" x="345" y="707" textLength="93" lengthAdjust="spacingAndGlyphs">Track 11</text>
<use href="#ha72" y="754"/><text class="h" x="345" y="779" textLength="48" lengthAdjust="spacingAndGlyphs">hats</text>
<use href="#hp72" y="826"/><text class="h" x="345" y="851" textLength="38" lengthAdjust="spacingAndGlyphs">sub</text>
<use href="#hs" y="898" fill="#7b4c4e"/><text class="s" x="345" y="920" textLength="115" lengthAdjust="spacingAndGlyphs">sub –..olume</text><use href="#au" transform="translate(481 914) scale(.85)" stroke="#dbe8e6"/><use href="#lock" y="898"/>
<use href="#ha32" y="930"/><text class="s" x="345" y="952" textLength="37" lengthAdjust="spacingAndGlyphs">fills</text>
<use href="#hp72" y="962"/><text class="h" x="345" y="987" textLength="41" lengthAdjust="spacingAndGlyphs">pad</text>
<use href="#hp72" y="1034"/><text class="h" x="345" y="1059" textLength="92" lengthAdjust="spacingAndGlyphs">Track 17</text>
<use href="#hp72" y="1106"/><text class="h" x="345" y="1131" textLength="93" lengthAdjust="spacingAndGlyphs">Track 18</text>
<use href="#hp72" y="1178"/><text class="h" x="345" y="1203" textLength="82" lengthAdjust="spacingAndGlyphs">vibrant</text>
<use href="#hp72" y="1250"/><text class="h" x="345" y="1275" textLength="93" lengthAdjust="spacingAndGlyphs">Track 20</text>
<use href="#hp72" y="1322"/><text class="h" x="345" y="1347" textLength="42" lengthAdjust="spacingAndGlyphs">MEL</text>
<use href="#hs" y="1394" fill="#2a5677"/><text class="s" x="345" y="1416" textLength="80" lengthAdjust="spacingAndGlyphs" style="fill:#c4d6e4">Track 22</text><path d="M477 1404H494L485.5 1415Z" fill="#c0d5e5"/><use href="#lock" y="1394"/>
<use href="#hs" y="1426" fill="#4f7a78"/><text class="s" x="345" y="1448" textLength="115" lengthAdjust="spacingAndGlyphs">Maste..lume</text><use href="#au" transform="translate(481 1442) scale(.85)" stroke="#dbe8e6"/><use href="#lock" y="1426"/>
</svg>
</body></html>
